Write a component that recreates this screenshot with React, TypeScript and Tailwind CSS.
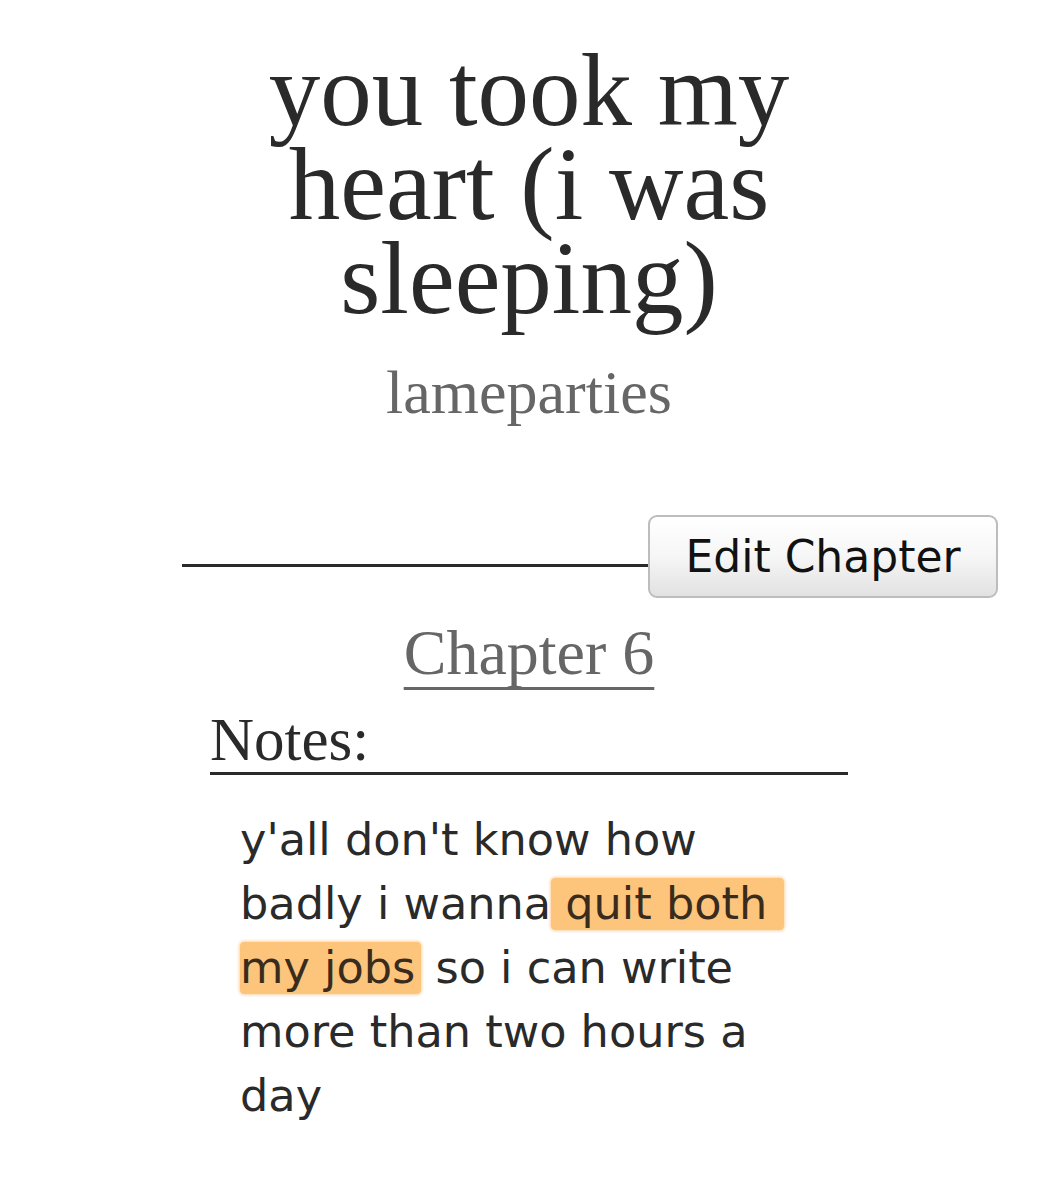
import React from "react";

const serif = "font-['Liberation_Serif','Times_New_Roman',serif]";
const sans = "font-['DejaVu_Sans','Verdana',sans-serif]";

function Highlight({
  children,
  className = "",
}: {
  children: React.ReactNode;
  className?: string;
}) {
  return (
    <span
      className={`bg-[#fdc47c] text-[#3a2c1c] rounded-[4px] shadow-[0_0_3px_1px_#fdd3a0] [box-decoration-break:clone] [-webkit-box-decoration-break:clone] ${className}`}
    >
      {children}
    </span>
  );
}

export default function App() {
  return (
    <div className="min-h-[1200px] w-[1058px] bg-white text-[#2a2a2a]">
      {/* work heading */}
      <div className="pt-[43px] flex flex-col items-center">
        <h1
          className={`${serif} text-[103px] leading-[94px] text-[#2a2a2a] text-center w-[600px]`}
        >
          you took my
          <br />
          heart (i was
          <br />
          sleeping)
        </h1>
        <div className={`${serif} mt-[32px] text-[62px] leading-[70px] text-[#666]`}>
          lameparties
        </div>
      </div>

      {/* chapter actions */}
      <div className="mt-[88px] flex items-center pl-[182px]">
        <div className="w-[466px] h-[3px] bg-[#2a2a2a] mt-[17px]" />
        <button
          className={`${sans} w-[350px] h-[83px] rounded-[9px] border-2 border-[#bdbdbd] bg-gradient-to-b from-white via-[#f6f6f6] to-[#e2e2e2] text-[44px] leading-[51px] text-[#111] shadow-[inset_0_1px_0_#fff]`}
        >
          Edit Chapter
        </button>
      </div>

      {/* chapter title */}
      <div className="mt-[19px] flex justify-center">
        <h2
          className={`${serif} text-[64px] leading-[72px] text-[#666] underline decoration-[3px] underline-offset-[13px] decoration-[#666] [text-decoration-skip-ink:none]`}
        >
          Chapter 6
        </h2>
      </div>

      {/* notes */}
      <div className="ml-[210px] w-[638px] mt-[19px]">
        <h3
          className={`${serif} text-[61px] leading-[64px] text-[#2a2a2a] border-b-[3px] border-[#2a2a2a]`}
        >
          Notes:
        </h3>
        <p
          className={`${sans} mt-[33px] ml-[30px] w-[570px] text-[44.6px] leading-[64px] text-[#2a2a2a]`}
        >
          y'all don't know how badly i wanna
          <Highlight className="pr-[17px]"> quit both</Highlight>{" "}
          <Highlight className="pr-[6px]">my jobs</Highlight> so i can write
          more than two hours a day
        </p>
      </div>
    </div>
  );
}
